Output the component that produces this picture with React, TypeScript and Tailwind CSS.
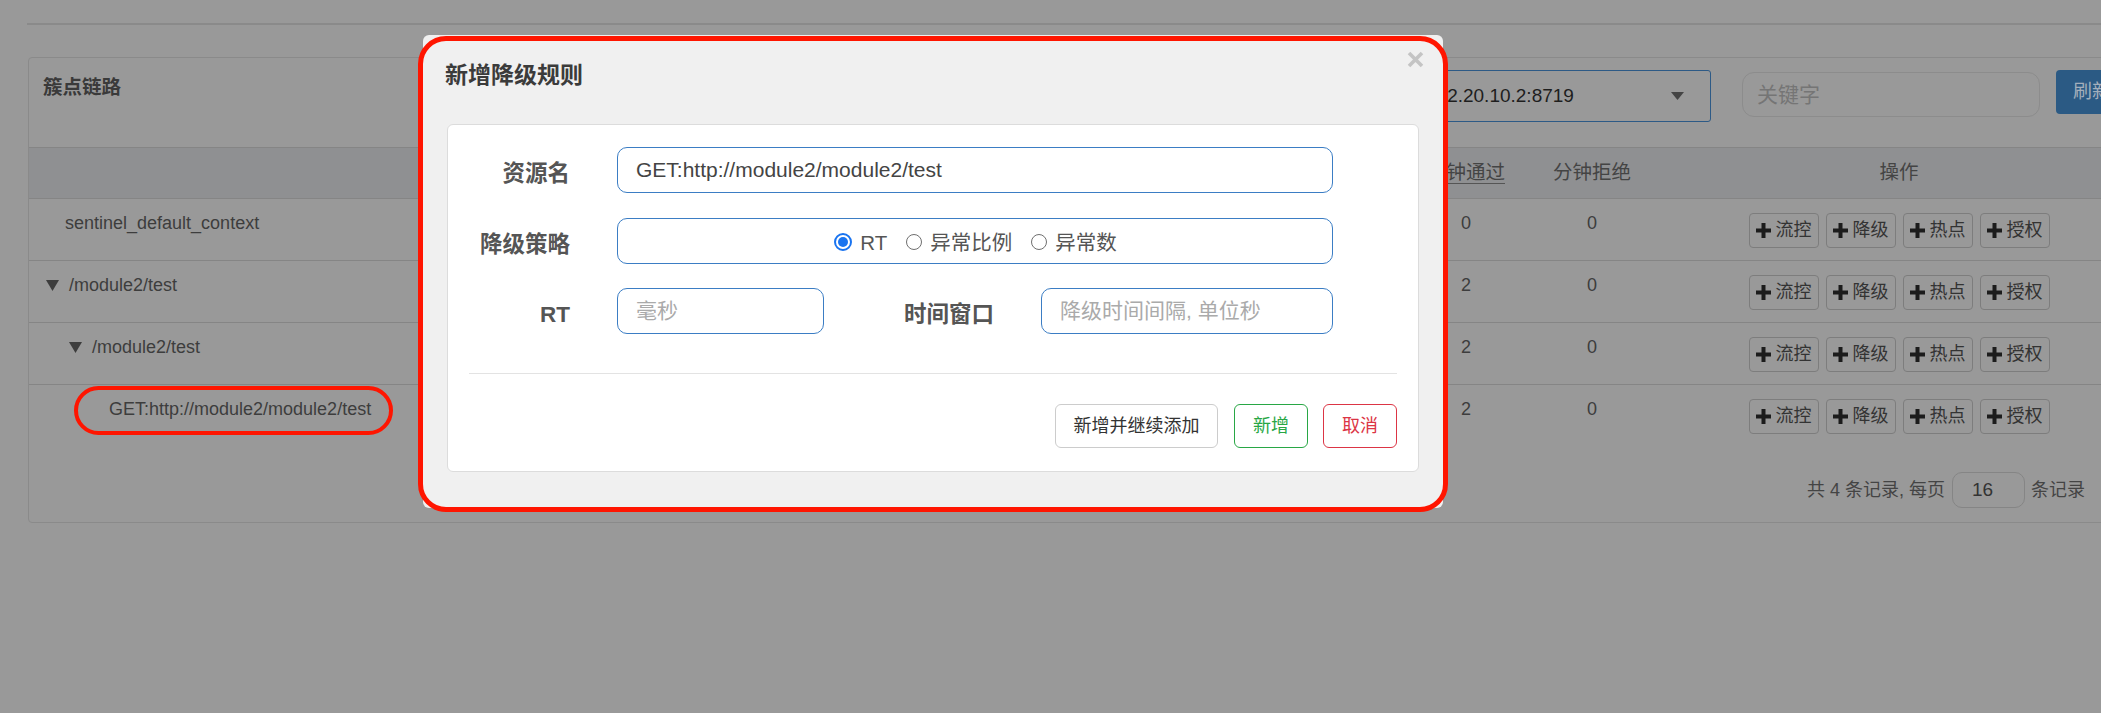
import React from "react";

const Plus = () => (
  <svg width="15" height="15" viewBox="0 0 15 15" className="shrink-0">
    <rect x="5.5" y="0" width="4" height="15" fill="#1c1c1c" />
    <rect x="0" y="5.5" width="15" height="4" fill="#1c1c1c" />
  </svg>
);

const Tri = () => (
  <svg width="13" height="11" viewBox="0 0 13 11" className="shrink-0">
    <polygon points="0,0 13,0 6.5,11" fill="#3d3d3d" />
  </svg>
);

const OpBtn = ({ label }: { label: string }) => (
  <div className="flex h-[35px] w-[70px] items-center gap-[5px] rounded-[4px] border border-[#7d7d7d] pl-[6px] text-[18px] text-[#333]">
    <Plus />
    <span>{label}</span>
  </div>
);

const rows = [
  { indent: 36, tri: false, text: "sentinel_default_context", a: "0", b: "0" },
  { indent: 17, tri: true, text: "/module2/test", a: "2", b: "0" },
  { indent: 40, tri: true, text: "/module2/test", a: "2", b: "0" },
  { indent: 80, tri: false, text: "GET:http://module2/module2/test", a: "2", b: "0" },
];

const Radio = ({ checked, label }: { checked: boolean; label: string }) => (
  <div className="flex items-center">
    {checked ? (
      <div className="flex h-[18px] w-[18px] items-center justify-center rounded-full border-[2px] border-[#1a74f0] bg-white">
        <div className="h-[10px] w-[10px] rounded-full bg-[#1a74f0]" />
      </div>
    ) : (
      <div className="h-[16px] w-[16px] rounded-full border-[1.5px] border-[#6f6f6f] bg-white" />
    )}
    <span className="ml-[8px] pt-[3px] text-[20.5px] text-[#555]">{label}</span>
  </div>
);

export default function App() {
  return (
    <div className="relative h-[713px] w-[2101px] overflow-hidden bg-[#999999] font-['Liberation_Sans','Noto_Sans_CJK_SC',sans-serif]">
      {/* page */}
      <div className="pl-[27px] pt-[23px]">
        <div className="h-[2px] bg-[#8a8a8a]" />
        <div className="ml-[1px] mt-[32px] w-[2116px] rounded-[4px] border border-[#8a8a8a]">
          <div className="flex h-[89px] items-start">
            <div className="pl-[14px] pt-[15px] text-[19.5px] font-bold text-[#3a3a3a]">簇点链路</div>
            <div className="ml-auto flex items-start pr-[15px]">
              <div className="mt-[12px] flex h-[52px] w-[298px] items-center rounded-[3px] border border-[#2d5a86] pl-[12px] pr-[26px] text-[19px] text-[#1e1e1e]">
                <span>172.20.10.2:8719</span>
                <svg width="13" height="8" viewBox="0 0 13 8" className="ml-auto">
                  <polygon points="0,0 13,0 6.5,8" fill="#444" />
                </svg>
              </div>
              <div className="ml-[31px] mt-[14px] flex h-[45px] w-[298px] items-center rounded-[12px] border border-[#8c8c8c] pl-[14px] text-[21px] text-[#757575]">
                关键字
              </div>
              <div className="ml-[16px] mt-[12px] flex h-[44px] w-[72px] items-center justify-center rounded-[4px] bg-[#2b5a84] text-[19px] text-[#a3aebb]">
                刷新
              </div>
            </div>
          </div>
          {/* table header */}
          <div className="grid h-[52px] grid-cols-[1fr_126px_126px_488px] items-center border-y border-[#858585] bg-[#8f9092] text-[19.5px] text-[#444]">
            <div />
            <div className="text-center underline decoration-[#555] underline-offset-[4px]">分钟通过</div>
            <div className="text-center">分钟拒绝</div>
            <div className="text-center">操作</div>
          </div>
          {rows.map((r, i) => (
            <div
              key={i}
              className={`grid h-[62px] grid-cols-[1fr_126px_126px_488px] items-start text-[18px] text-[#3d3d3d] ${i < 3 ? "border-b border-[#858585]" : ""}`}
            >
              <div className="flex items-center pt-[11px]" style={{ paddingLeft: r.indent }}>
                {r.tri && (
                  <span className="mr-[10px] flex items-center">
                    <Tri />
                  </span>
                )}
                <span className="leading-[26px]">{r.text}</span>
              </div>
              <div className="pt-[11px] text-center leading-[26px]">{r.a}</div>
              <div className="pt-[11px] text-center leading-[26px]">{r.b}</div>
              <div className="flex justify-center gap-[7px] pt-[14px]">
                <OpBtn label="流控" />
                <OpBtn label="降级" />
                <OpBtn label="热点" />
                <OpBtn label="授权" />
              </div>
            </div>
          ))}
          <div className="mb-[14px] mt-[25px] flex h-[36px] items-center justify-end pr-[58px] text-[18px] text-[#444]">
            <span>共 4 条记录, 每页</span>
            <div className="ml-[7px] mr-[6px] flex h-[36px] w-[73px] items-center rounded-[10px] border border-[#858585] pl-[19px] text-[19px] text-[#333]">
              16
            </div>
            <span>条记录</span>
          </div>
        </div>
      </div>

      {/* red oval annotation */}
      <div className="absolute left-[74px] top-[386px] h-[49px] w-[319px] rounded-full border-[4.5px] border-[#ff1500]" />

      {/* modal */}
      <div className="absolute left-[423px] top-[35px] h-[473px] w-[1020px] rounded-[6px] bg-[#f0f0f0]">
        <div className="flex h-[89px] items-start justify-between pl-[22px] pr-[19px]">
          <div className="mt-[25px] text-[23px] font-bold leading-[30px] text-[#3b3b3b]">新增降级规则</div>
          <svg width="17" height="17" viewBox="0 0 17 17" className="mt-[16px]">
            <path d="M2 2 L15 15 M15 2 L2 15" stroke="#c4c4c4" strokeWidth="3.6" strokeLinecap="butt" />
          </svg>
        </div>
        <div className="mx-[24px] h-[348px] rounded-[6px] border border-[#dcdcdc] bg-white px-[21px] pt-[22px]">
          <div className="flex items-center">
            <div className="w-[101px] pt-[7px] text-right text-[22.5px] font-bold text-[#555]">资源名</div>
            <div className="ml-[47px] flex h-[46px] w-[716px] items-center rounded-[10px] border border-[#3b7dc4] pl-[18px] text-[21px] text-[#444]">
              GET:http://module2/module2/test
            </div>
          </div>
          <div className="mt-[25px] flex items-center">
            <div className="w-[101px] pt-[7px] text-right text-[22.5px] font-bold text-[#555]">降级策略</div>
            <div className="ml-[47px] flex h-[46px] w-[716px] items-center justify-center gap-[19px] rounded-[10px] border border-[#3b7dc4] pl-[1px] pt-[2px]">
              <Radio checked label="RT" />
              <Radio checked={false} label="异常比例" />
              <Radio checked={false} label="异常数" />
            </div>
          </div>
          <div className="mt-[24px] flex items-center">
            <div className="w-[101px] pt-[8px] text-right text-[22.5px] font-bold text-[#555]">RT</div>
            <div className="ml-[47px] flex h-[46px] w-[207px] items-center rounded-[10px] border border-[#3b7dc4] pl-[18px] text-[21px] text-[#aaa]">
              毫秒
            </div>
            <div className="w-[170px] pt-[8px] text-right text-[22.5px] font-bold text-[#555]">时间窗口</div>
            <div className="ml-[47px] flex h-[46px] w-[292px] items-center rounded-[10px] border border-[#3b7dc4] pl-[18px] text-[21px] text-[#aaa]">
              降级时间间隔, 单位秒
            </div>
          </div>
          <div className="mt-[39px] h-px bg-[#e3e3e3]" />
          <div className="mt-[30px] flex justify-end">
            <div className="flex h-[44px] w-[163px] items-center justify-center rounded-[6px] border border-[#cccccc] text-[18px] text-[#333]">
              新增并继续添加
            </div>
            <div className="ml-[16px] flex h-[44px] w-[74px] items-center justify-center rounded-[6px] border border-[#28a745] text-[18px] text-[#28a745]">
              新增
            </div>
            <div className="ml-[15px] flex h-[44px] w-[74px] items-center justify-center rounded-[6px] border border-[#dc3545] text-[18px] text-[#dc3545]">
              取消
            </div>
          </div>
        </div>
      </div>

      {/* red modal annotation */}
      <div className="absolute left-[418px] top-[36px] h-[476px] w-[1030px] rounded-[28px] border-[5px] border-[#ff1500]" />
    </div>
  );
}
